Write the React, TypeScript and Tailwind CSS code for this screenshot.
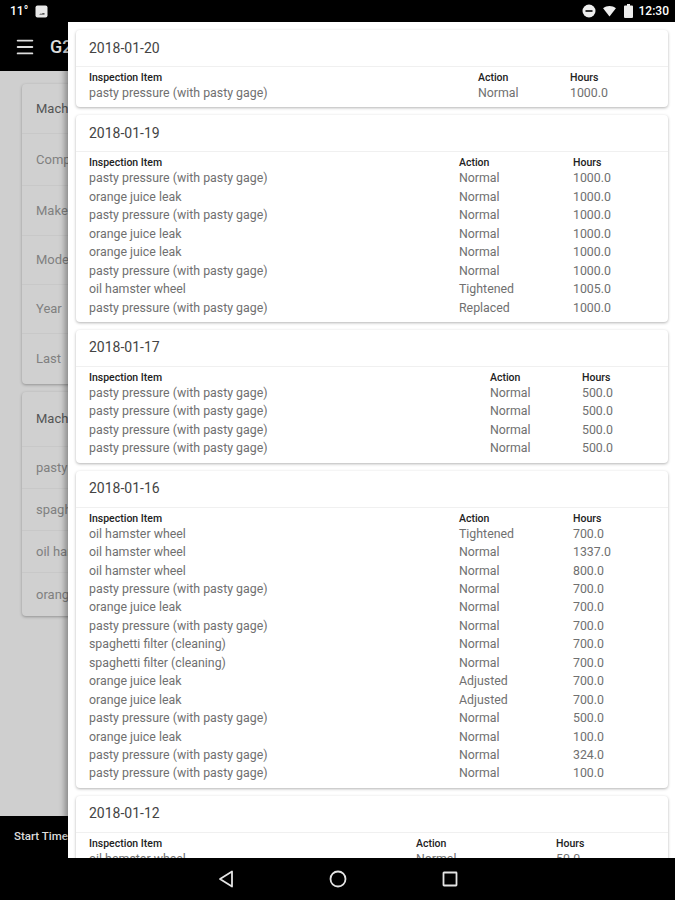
import { Menu } from 'lucide-react';

interface Row {
  item: string;
  action: string;
  hours: string;
}

interface Inspection {
  date: string;
  cols: string;
  rows: Row[];
}

const PASTY = 'pasty pressure (with pasty gage)';
const JUICE = 'orange juice leak';
const WHEEL = 'oil hamster wheel';
const FILTER = 'spaghetti filter (cleaning)';

const inspections: Inspection[] = [
  {
    date: '2018-01-20',
    cols: 'grid-cols-[389px_92px_1fr]',
    rows: [{ item: PASTY, action: 'Normal', hours: '1000.0' }],
  },
  {
    date: '2018-01-19',
    cols: 'grid-cols-[370px_114px_1fr]',
    rows: [
      { item: PASTY, action: 'Normal', hours: '1000.0' },
      { item: JUICE, action: 'Normal', hours: '1000.0' },
      { item: PASTY, action: 'Normal', hours: '1000.0' },
      { item: JUICE, action: 'Normal', hours: '1000.0' },
      { item: JUICE, action: 'Normal', hours: '1000.0' },
      { item: PASTY, action: 'Normal', hours: '1000.0' },
      { item: WHEEL, action: 'Tightened', hours: '1005.0' },
      { item: PASTY, action: 'Replaced', hours: '1000.0' },
    ],
  },
  {
    date: '2018-01-17',
    cols: 'grid-cols-[401px_92px_1fr]',
    rows: [
      { item: PASTY, action: 'Normal', hours: '500.0' },
      { item: PASTY, action: 'Normal', hours: '500.0' },
      { item: PASTY, action: 'Normal', hours: '500.0' },
      { item: PASTY, action: 'Normal', hours: '500.0' },
    ],
  },
  {
    date: '2018-01-16',
    cols: 'grid-cols-[370px_114px_1fr]',
    rows: [
      { item: WHEEL, action: 'Tightened', hours: '700.0' },
      { item: WHEEL, action: 'Normal', hours: '1337.0' },
      { item: WHEEL, action: 'Normal', hours: '800.0' },
      { item: PASTY, action: 'Normal', hours: '700.0' },
      { item: JUICE, action: 'Normal', hours: '700.0' },
      { item: PASTY, action: 'Normal', hours: '700.0' },
      { item: FILTER, action: 'Normal', hours: '700.0' },
      { item: FILTER, action: 'Normal', hours: '700.0' },
      { item: JUICE, action: 'Adjusted', hours: '700.0' },
      { item: JUICE, action: 'Adjusted', hours: '700.0' },
      { item: PASTY, action: 'Normal', hours: '500.0' },
      { item: JUICE, action: 'Normal', hours: '100.0' },
      { item: PASTY, action: 'Normal', hours: '324.0' },
      { item: PASTY, action: 'Normal', hours: '100.0' },
    ],
  },
  {
    date: '2018-01-12',
    cols: 'grid-cols-[327px_140px_1fr]',
    rows: [{ item: WHEEL, action: 'Normal', hours: '50.0' }],
  },
];

const InspectionCard = ({ date, cols, rows }: Inspection) => (
  <div className="shrink-0 bg-white rounded-sm shadow-[0_1px_3px_rgba(0,0,0,0.3)]">
    <div className="h-[37px] flex items-center px-[13px] border-b border-[#f0f0f0] text-[14px] text-[#444]">{date}</div>
    <div className="pt-[3px] pb-[5px] pl-[13px]">
      <div className={`grid ${cols} h-[14px] items-center text-[10.5px] font-medium text-[#222]`}>
        <span>Inspection Item</span>
        <span>Action</span>
        <span>Hours</span>
      </div>
      {rows.map((row, index) => (
        <div key={index} className={`grid ${cols} h-[18.45px] items-center text-[12.35px] text-[#707070]`}>
          <span>{row.item}</span>
          <span>{row.action}</span>
          <span>{row.hours}</span>
        </div>
      ))}
    </div>
  </div>
);

const BackRow = ({ label, dark, last, height }: { label: string; dark?: boolean; last?: boolean; height: string }) => (
  <div className={`${height} flex items-center pl-[14px] text-[13px] ${dark ? 'text-[#555]' : 'text-[#808080]'} ${last ? '' : 'border-b border-[#c8c8c8]'}`}>
    {label}
  </div>
);

const StatusBar = () => (
  <div className="h-[22px] shrink-0 bg-black flex items-center pl-[10px] pr-[6px] text-white text-[12px] font-medium">
    <span>11°</span>
    <svg className="ml-[7px]" width="13" height="13" viewBox="0 0 13 13">
      <rect x="0.5" y="0.5" width="12" height="12" rx="2" fill="#e8e8e8" />
      <path d="M4 9.5h5.5v-1.2H7.6L6.8 9 6 8.4 4 9.5z" fill="#222" />
    </svg>
    <div className="ml-auto flex items-center">
      <svg width="14" height="14" viewBox="0 0 14 14">
        <circle cx="7" cy="7" r="6.500" fill="#eee" />
        <rect x="3.500" y="6" width="7" height="2" fill="#333" />
      </svg>
      <svg className="ml-[7px]" width="13" height="11" viewBox="0 0 14 12">
        <path d="M0 2.500C4-.8 10-.8 14 2.500L7 11.500z" fill="#eee" />
      </svg>
      <svg className="ml-[8px]" width="9" height="14" viewBox="0 0 9 14">
        <path d="M3 0h3v1.500h2a1 1 0 0 1 1 1V13a1 1 0 0 1-1 1H1a1 1 0 0 1-1-1V2.500a1 1 0 0 1 1-1h2z" fill="#eee" />
      </svg>
      <span className="ml-[6px] text-[12px]">12:30</span>
    </div>
  </div>
);

const NavBar = () => (
  <div className="h-[42px] shrink-0 bg-black flex items-center justify-center gap-[95px]">
    <svg width="16" height="18" viewBox="0 0 16 18" fill="none" stroke="#e4e4e4" strokeWidth="1.8" strokeLinejoin="round">
      <path d="M14 1.500V16.500L2 9z" />
    </svg>
    <svg width="18" height="18" viewBox="0 0 18 18" fill="none" stroke="#e4e4e4" strokeWidth="1.8">
      <circle cx="9" cy="9" r="7.500" />
    </svg>
    <svg width="16" height="16" viewBox="0 0 16 16" fill="none" stroke="#e4e4e4" strokeWidth="1.8">
      <rect x="1.500" y="1.500" width="13" height="13" rx="0.5" />
    </svg>
  </div>
);

export default function App() {
  return (
    <div className="relative h-[900px] w-[675px] overflow-hidden flex flex-col bg-black font-['Roboto',sans-serif]">
      <StatusBar />
      <div className="h-[49px] shrink-0 bg-black flex items-center pl-[14px] text-[#ddd]">
        <Menu size={22} strokeWidth={2} />
        <span className="ml-[14px] text-[18px] font-medium">G2</span>
      </div>
      <div className="flex-1 bg-[#cfcfcf] pt-[13px] pl-[22px] flex flex-col gap-[8px]">
        <div className="h-[300px] bg-[#d0d0d0] rounded-sm shadow-[0_1px_3px_rgba(0,0,0,0.3)]">
          <BackRow label="Machine" dark height="h-[50px]" />
          <BackRow label="Company" height="h-[52px]" />
          <BackRow label="Make" height="h-[50px]" />
          <BackRow label="Model" height="h-[49px]" />
          <BackRow label="Year" height="h-[49px]" />
          <BackRow label="Last" last height="h-[50px]" />
        </div>
        <div className="h-[224px] bg-[#d0d0d0] rounded-sm shadow-[0_1px_3px_rgba(0,0,0,0.3)]">
          <BackRow label="Machine" dark height="h-[55px]" />
          <BackRow label="pasty" height="h-[42px]" />
          <BackRow label="spaghetti" height="h-[42px]" />
          <BackRow label="oil hamster" height="h-[42px]" />
          <BackRow label="orange" last height="h-[43px]" />
        </div>
      </div>
      <div className="h-[42px] shrink-0 bg-black flex items-center pl-[14px] text-[#ddd] text-[11.5px] font-medium">Start Time</div>
      <NavBar />
      <div className="absolute top-[22px] left-[68px] w-[607px] h-[836px] overflow-hidden bg-white shadow-[-3px_0_6px_rgba(0,0,0,0.35)] pt-[8px] pl-[8px] pr-[7px] flex flex-col gap-[8px]">
        {inspections.map((inspection) => (
          <InspectionCard key={inspection.date} {...inspection} />
        ))}
      </div>
    </div>
  );
}
